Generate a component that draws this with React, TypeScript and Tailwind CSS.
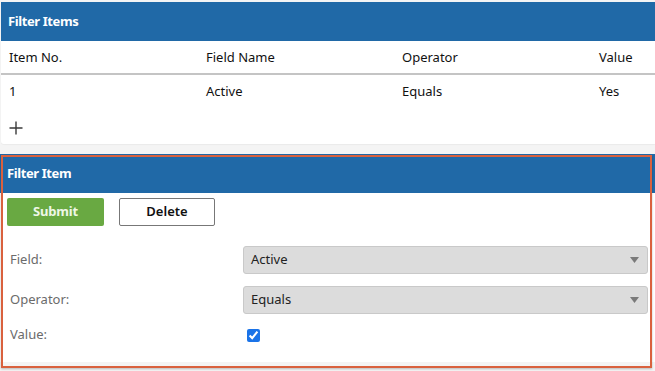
const cols = "grid grid-cols-[197px_196px_197px_1fr] pl-2";

const SelectBox = ({ value }: { value: string }) => (
  <div className="flex h-[28px] w-[405px] items-center justify-between rounded-[3px] border border-[#c9c9c9] bg-[#dcdcdc] pl-[7px] pr-[8px] text-[13px] text-[#222]">
    <span>{value}</span>
    <svg width="9" height="7" viewBox="0 0 9 7">
      <path d="M0 0h9L4.5 6z" fill="#7a7a7a" />
    </svg>
  </div>
);

const App = () => {
  return (
    <div className="min-h-screen bg-[#f4f4f4] pt-[2px] font-['Noto_Sans',sans-serif] text-[13px] text-[#111]">
      {/* filter items list */}
      <div className="ml-px rounded-bl-[3px] bg-white shadow-[0_1px_1px_rgba(0,0,0,0.04)]">
        <div className="flex h-[39px] items-center bg-[#2069a7] px-[7px] pt-px text-[13px] font-bold tracking-[-0.4px] text-white">
          Filter Items
        </div>
        <div className={`${cols} h-[34px] items-center border-b-2 border-[#c4c4c4] pt-[2px]`}>
          <span>Item No.</span>
          <span>Field Name</span>
          <span>Operator</span>
          <span>Value</span>
        </div>
        <div className={`${cols} h-[31px] items-center pt-[2px]`}>
          <span>1</span>
          <span>Active</span>
          <span>Equals</span>
          <span>Yes</span>
        </div>
        <div className="h-[38px] pl-[8px] pt-[15px]">
          <svg width="14" height="14" viewBox="0 0 14 14">
            <path d="M7 0.5v13M0.5 7h13" stroke="#3a3a3a" strokeWidth="1.4" />
          </svg>
        </div>
      </div>

      {/* selected filter item */}
      <div className="relative mt-[10px] bg-white pb-[15px]">
        <div className="flex h-[39px] items-center bg-[#2069a7] px-[7px] pt-px text-[13px] font-bold tracking-[-0.4px] text-white">
          Filter Item
        </div>
        <div className="flex gap-[15px] pl-[7px] pt-[5px]">
          <button className="h-[28px] w-[97px] rounded-[2px] bg-[#69a942] text-[13px] font-bold tracking-[-0.2px] text-[#eef7e6]">
            Submit
          </button>
          <button className="h-[28px] w-[96px] rounded-[2px] border border-[#777] bg-white text-[13px] font-semibold text-[#111]">
            Delete
          </button>
        </div>
        <div className="flex flex-col pt-[20px] text-[#6b6b6b]">
          <div className="flex items-center pl-[10px]">
            <span className="w-[233px]">Field:</span>
            <SelectBox value="Active" />
          </div>
          <div className="mt-[12px] flex items-center pl-[10px]">
            <span className="w-[233px]">Operator:</span>
            <SelectBox value="Equals" />
          </div>
          <div className="mt-[9px] flex h-[24px] items-center pl-[10px]">
            <span className="w-[237px]">Value:</span>
            <input type="checkbox" checked readOnly className="m-0 h-[13px] w-[13px] accent-[#1a73e8]" />
          </div>
        </div>
        <div className="pointer-events-none absolute left-px top-px h-[213px] w-[651px] border-2 border-[#d9613e] shadow-[0_1px_2px_rgba(0,0,0,0.25)]" />
      </div>
    </div>
  );
};

export default App;
